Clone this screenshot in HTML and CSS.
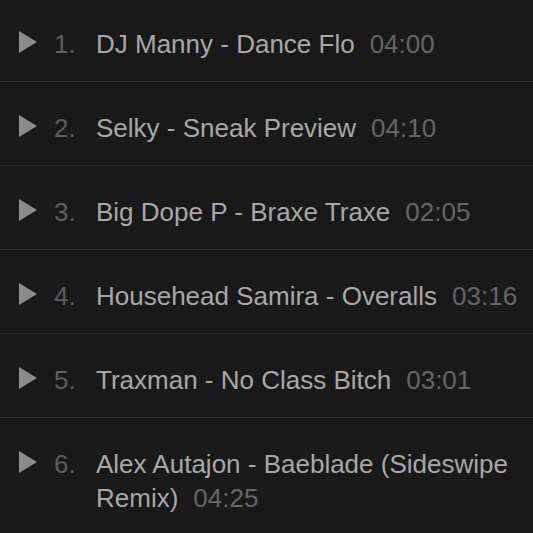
FILE: index.html
```html
<!DOCTYPE html>
<html lang="en">
<head>
    <meta charset="UTF-8">
    <meta name="viewport" content="width=device-width, initial-scale=1.0">
    <title>Tracklist</title>
    <link rel="stylesheet" href="styles.css">
</head>
<body>
    <ol class="tracklist">
        <li class="track">
            <svg class="play" viewBox="0 0 18 22"><path d="M0 0 L18 11 L0 22 Z"/></svg>
            <span class="num">1.</span>
            <span class="title">DJ Manny - Dance Flo<span class="time">04:00</span></span>
        </li>
        <li class="track">
            <svg class="play" viewBox="0 0 18 22"><path d="M0 0 L18 11 L0 22 Z"/></svg>
            <span class="num">2.</span>
            <span class="title">Selky - Sneak Preview<span class="time">04:10</span></span>
        </li>
        <li class="track">
            <svg class="play" viewBox="0 0 18 22"><path d="M0 0 L18 11 L0 22 Z"/></svg>
            <span class="num">3.</span>
            <span class="title">Big Dope P - Braxe Traxe<span class="time">02:05</span></span>
        </li>
        <li class="track">
            <svg class="play" viewBox="0 0 18 22"><path d="M0 0 L18 11 L0 22 Z"/></svg>
            <span class="num">4.</span>
            <span class="title">Househead Samira - Overalls<span class="time">03:16</span></span>
        </li>
        <li class="track">
            <svg class="play" viewBox="0 0 18 22"><path d="M0 0 L18 11 L0 22 Z"/></svg>
            <span class="num">5.</span>
            <span class="title">Traxman - No Class Bitch<span class="time">03:01</span></span>
        </li>
        <li class="track">
            <svg class="play" viewBox="0 0 18 22"><path d="M0 0 L18 11 L0 22 Z"/></svg>
            <span class="num">6.</span>
            <span class="title">Alex Autajon - Baeblade (Sideswipe Remix)<span class="time">04:25</span></span>
        </li>
    </ol>
</body>
</html>
```

FILE: styles.css
```css
* {
    margin: 0;
    padding: 0;
    box-sizing: border-box;
}

body {
    font-family: 'Liberation Sans', Arial, sans-serif;
    background: #19191a;
    color: #a6a6a6;
    overflow: hidden;
}

.tracklist {
    list-style: none;
    margin-top: -2px;
}

.track {
    display: flex;
    align-items: flex-start;
    padding: 29px 8px 20px 19px;
    border-bottom: 1px solid #2b2b2c;
    font-size: 26px;
    line-height: 34px;
}

.play {
    flex: none;
    width: 18px;
    height: 22px;
    margin-top: 4px;
    fill: #8c8c8c;
}

.num {
    flex: none;
    width: 42px;
    margin-left: 17px;
    color: #5e5e5f;
}

.title {
    flex: 1;
    color: #a8a8a8;
}

.time {
    margin-left: 15px;
    color: #666667;
}
```
